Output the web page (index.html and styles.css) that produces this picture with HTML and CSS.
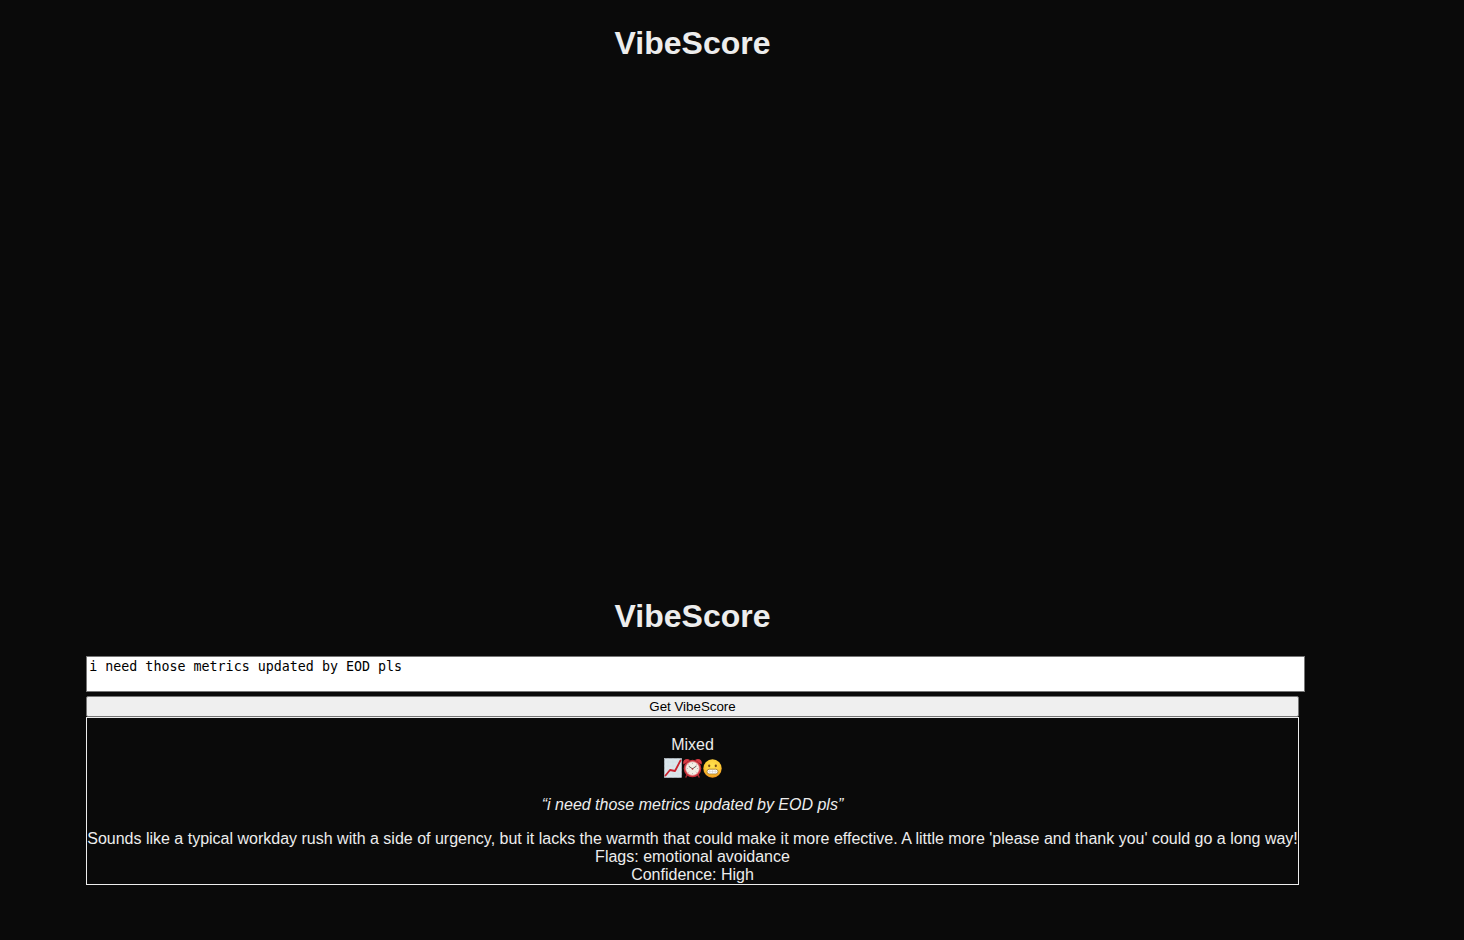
FILE: index.html
```html
<!DOCTYPE html>
<html lang="en">
<head>
<meta charset="utf-8">
<title>VibeScore</title>
<link rel="stylesheet" href="styles.css">
</head>
<body>
<main class="page">
  <header class="hero"><h1 class="title">VibeScore</h1></header>
  <section class="score">
    <h1 class="title">VibeScore</h1>
    <form class="form">
      <textarea class="message" rows="2" aria-label="Message" spellcheck="false">i need those metrics updated by EOD pls</textarea>
      <button class="submit" type="button">Get VibeScore</button>
    </form>
    <article class="result">
      <div>Mixed</div>
      <div class="emojis">
        <svg class="chart" viewBox="0 0 18 20" role="img" aria-label="Chart increasing">
          <rect x=".5" y=".5" width="17" height="19" fill="#dce6ec" stroke="#c3ced5" stroke-width=".6"/>
          <path d="M0 4h18M0 8h18M0 12h18M0 16h18M4 0v20M9 0v20M14 0v20" stroke="#cddae2" stroke-width=".4"/>
          <path d="M1.500 17.500l4.500-5.500 5 1 5.500-10.500" fill="none" stroke="#c9222e" stroke-width="1.800" stroke-linejoin="round" stroke-linecap="round"/>
        </svg>
        <svg class="clock" viewBox="0 0 21 20" role="img" aria-label="Alarm clock">
          <path d="M5.500 16l-1.500 3M15.500 16l1.500 3" stroke="#9c2731" stroke-width="1.600" stroke-linecap="round"/>
          <path d="M1.500 6.500C0 2.500 4-.5 8 2zM19.500 6.500c1.500-4-2.500-7-6.500-4.500z" fill="#dc3944"/>
          <circle cx="10.500" cy="10.500" r="8.800" fill="#c9303b"/>
          <circle cx="10.500" cy="10.500" r="6.900" fill="#f3eee6" stroke="#e57c80" stroke-width=".7"/>
          <path d="M10.500 4.800v1M10.500 15.200v1M4.800 10.500h1M15.200 10.500h1M6.500 6.500l.7.700M14.500 6.500l-.7.700M6.500 14.500l.7-.7M14.500 14.500l-.7-.7" stroke="#888" stroke-width=".6"/>
          <path d="M6.800 8.300l3.700 2.500 4-2.800" fill="none" stroke="#5a504c" stroke-width=".9"/>
          <circle cx="10.500" cy="10.800" r=".9" fill="#b1343a"/>
        </svg>
        <svg class="face" viewBox="0 0 19 19" role="img" aria-label="Grimacing face">
          <defs><radialGradient id="skin" cx=".5" cy=".35" r=".65"><stop offset="0" stop-color="#ffe351"/><stop offset=".65" stop-color="#fdc934"/><stop offset="1" stop-color="#ee921c"/></radialGradient></defs>
          <circle cx="9.500" cy="9.500" r="9.200" fill="url(#skin)"/>
          <ellipse cx="6.200" cy="6.800" rx="1.100" ry="1.400" fill="#7a4a16"/>
          <ellipse cx="12.800" cy="6.800" rx="1.100" ry="1.400" fill="#7a4a16"/>
          <rect x="4" y="10.200" width="11" height="4.800" rx="2.300" fill="#fff" stroke="#a1752a" stroke-width=".8"/>
          <path d="M4.500 12.600h10M6.700 10.600v4M9.500 10.600v4M12.300 10.600v4" stroke="#c4bdae" stroke-width=".4"/>
        </svg>
      </div>
      <p class="quote">“i need those metrics updated by EOD pls”</p>
      <div>Sounds like a typical workday rush with a side of urgency, but it lacks the warmth that could make it more effective. A little more 'please and thank you' could go a long way!</div>
      <div>Flags: emotional avoidance</div>
      <div>Confidence: High</div>
    </article>
  </section>
</main>
</body>
</html>
```
FILE: styles.css
```css
body {
  margin: 0;
  background: #0a0a0a;
  color: #ededed;
  font: 16px/18px "Liberation Sans", Arial, sans-serif;
}

.page {
  box-sizing: border-box;
  display: flex;
  flex-direction: column;
  align-items: center;
  min-height: 100vh;
  padding: 25px 79px 55px 0;
  text-align: center;
}

.hero {
  flex: 1;
}

.title {
  margin: 0;
  font-size: 32px;
  line-height: 36px;
}

.score {
  width: fit-content;
}

.form {
  display: flex;
  flex-direction: column;
  gap: 4px;
  margin-top: 22px;
}

.message {
  box-sizing: content-box;
  width: 100%;
  height: 30px;
  margin: 0;
  padding: 2px;
  border: 1px solid #767676;
  background: #fff;
  color: #000;
  font-family: "DejaVu Sans Mono", monospace;
  line-height: 15px;
  resize: none;
}

.submit {
  height: 21px;
  padding: 1px 6px;
  border: 1px solid #767676;
  border-radius: 2px;
  background: #efefef;
  color: #000;
  font-family: "Liberation Sans", Arial, sans-serif;
  line-height: 15px;
}

.result {
  padding-top: 18px;
  border: 1px solid #ededed;
}

.emojis {
  box-sizing: border-box;
  display: flex;
  align-items: center;
  justify-content: center;
  height: 26px;
  padding-top: 2px;
}

.chart {
  width: 18px;
  height: 20px;
}

.clock {
  width: 21px;
  height: 20px;
}

.face {
  width: 19px;
  height: 19px;
}

.quote {
  margin: 16px 0;
  font-style: italic;
}
```
